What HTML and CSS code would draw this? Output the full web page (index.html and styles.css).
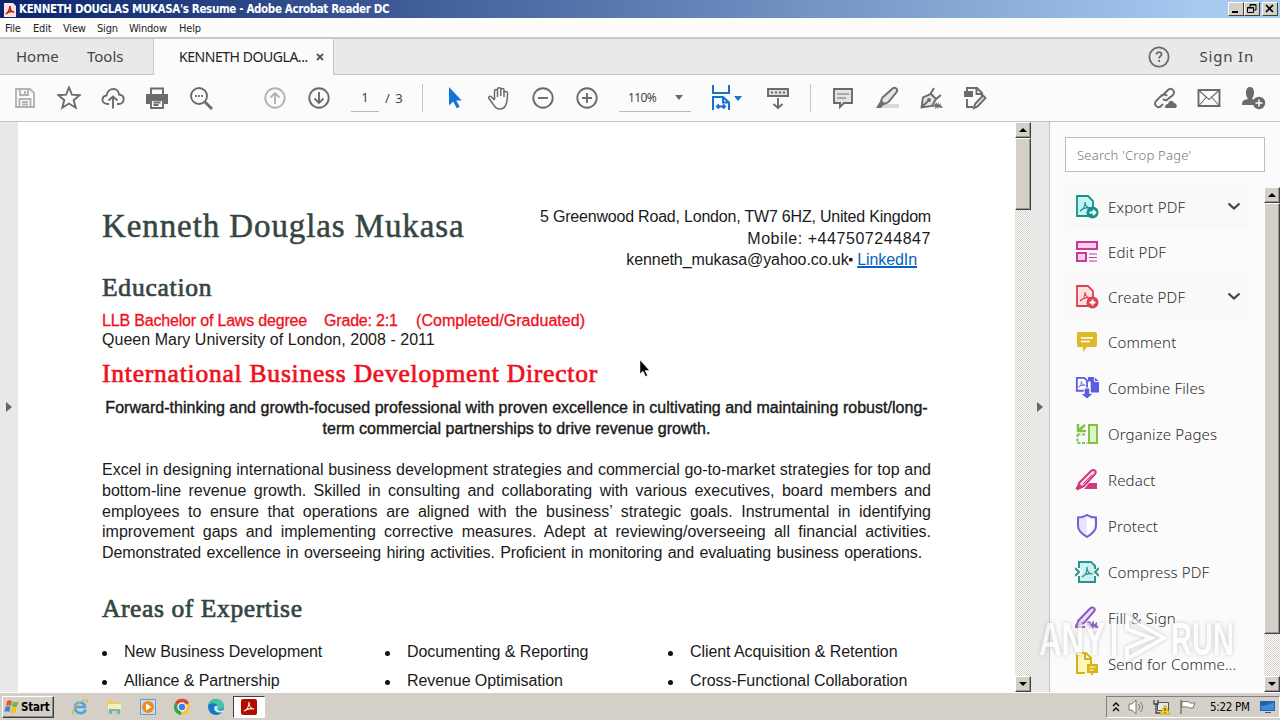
FILE: index.html
```
<!DOCTYPE html>
<html lang="en">
<head>
    <meta charset="UTF-8">
    <title>KENNETH DOUGLAS MUKASA's Resume - Adobe Acrobat Reader DC</title>
    <link rel="stylesheet" href="styles.css">
</head>
<body>

    <div class="titlebar">
        <svg class="app-icon" width="12" height="15" viewBox="0 0 12 15"><path d="M0 1h9l3 3v11H0z" fill="#f6e4e2"/><path d="M2 12c2-1 4-5 4-8 0 4 2 6 4 6-3-1-6 0-8 2z" fill="none" stroke="#c4160c" stroke-width="1.5"/></svg>
        <span class="title">KENNETH DOUGLAS MUKASA's Resume - Adobe Acrobat Reader DC</span>
        <div class="win-buttons">
            <div class="win-btn"><svg width="14" height="12"><path d="M3 9h6" stroke="#000" stroke-width="2"/></svg></div>
            <div class="win-btn"><svg width="14" height="12"><path d="M5 4V1.5h6V7H9M5 2h6M2.500 4.500h6v5h-6zM2 5h7" fill="none" stroke="#000"/></svg></div>
            <div class="win-btn close"><svg width="14" height="12"><path d="M3 2l7 7M10 2l-7 7" stroke="#000" stroke-width="1.700"/></svg></div>
        </div>
    </div>

    <div class="menubar">
        <span class="m-file">File</span>
        <span class="m-edit">Edit</span>
        <span class="m-view">View</span>
        <span class="m-sign">Sign</span>
        <span class="m-window">Window</span>
        <span>Help</span>
    </div>

    <div class="tabs">
        <div class="tabs-left">
            <span class="home">Home</span>
            <span class="tools-tab">Tools</span>
        </div>
        <div class="tab-active">
            <span>KENNETH DOUGLA...</span>
            <svg width="8" height="8" viewBox="0 0 8 8"><path d="M1 1l6 6M7 1L1 7" stroke="#555" stroke-width="1.800"/></svg>
        </div>
        <div class="tabs-right">
            <svg width="22" height="22" viewBox="0 0 22 22" fill="none" stroke="#6b6b6b" stroke-width="1.800"><circle cx="11" cy="11" r="9.600"/><path d="M8.500 8.500c0-3.200 5-3 5 0 0 1.800-2.400 1.800-2.400 4M11.100 14v2"/></svg>
            <span class="signin">Sign In</span>
        </div>
    </div>

    <div class="toolbar">
        <div class="tool dim"><svg width="24" height="24" viewBox="0 0 24 24"><path d="M3 3h14l4 4v14H3zM7 3v6h8V3M12 5v3M6.500 21v-8h11v8M9 16h6M9 18.500h6"/></svg></div>
        <div class="tool"><svg width="24" height="24" viewBox="0 0 24 24"><path d="M12 1.500l2.900 7.200 7.800.5-6 5 2 7.500L12 17.500l-6.700 4.200 2-7.500-6-5 7.800-.5z"/></svg></div>
        <div class="tool"><svg width="24" height="24" viewBox="0 0 24 24"><path d="M8 18H6.500C2.800 18 1 15.600 1.500 13c.4-2 2-3.300 4-3.500C6 5.500 9 3 12.500 3c3.300 0 5.300 2.500 5.500 5.500 3.500.3 5 2.500 4.700 5-.3 2.700-2 4.500-5 4.500H16M12 22.500V11M7.500 14.500L12 10.500l4.500 4"/></svg></div>
        <div class="tool"><svg width="24" height="24" viewBox="0 0 24 24"><path d="M6 8V2.500h12V8" /><path d="M1 8h22v10h-4v-4H5v4H1z" class="solid"/><path d="M6 14h12v8H6zM8.500 16.500h7M8.500 19h5"/></svg></div>
        <div class="tool"><svg width="24" height="24" viewBox="0 0 24 24"><circle cx="10" cy="10" r="8"/><path d="M16 16l7 7" stroke-width="2.800"/><path d="M6 10h1.800M9.100 10h1.800M12.200 10H14"/></svg></div>
        <div class="tool dim nav-up"><svg width="24" height="24" viewBox="0 0 24 24"><circle cx="12" cy="12" r="9.700"/><path d="M12 18V7M7.500 11.500L12 7l4.500 4.500"/></svg></div>
        <div class="tool"><svg width="24" height="24" viewBox="0 0 24 24"><circle cx="12" cy="12" r="9.700"/><path d="M12 6v11M7.500 12.500L12 17l4.500-4.500"/></svg></div>
        <div class="page-num">1</div>
        <div class="page-total">/ 3</div>
        <div class="sep"></div>
        <div class="tool pointer"><svg width="24" height="24" viewBox="0 0 24 24"><path d="M6 1v18.500l4.200-4 3.500 6.700 3-1.500-3.500-6.200h5.500z" fill="#1473d8" stroke="none"/></svg></div>
        <div class="tool"><svg width="24" height="24" viewBox="0 0 24 24" class="thin"><path d="M7.500 14V5c0-2 3-2 3 0v6M10.500 10V3.200c0-2 3.300-2 3.300 0V10M13.800 10V4c0-2 3.200-2 3.200 0v7M17 7c0-2 3.500-2 3.500 0 0 4 .2 7-1.300 11-1 3-3 5-6.500 5-4 0-5.200-2.300-6.700-5L2 12.500c-1-2 1-3 2.500-1.500L7.500 14"/></svg></div>
        <div class="tool"><svg width="24" height="24" viewBox="0 0 24 24"><circle cx="12" cy="12" r="9.700"/><path d="M7 12h10"/></svg></div>
        <div class="tool"><svg width="24" height="24" viewBox="0 0 24 24"><circle cx="12" cy="12" r="9.700"/><path d="M7 12h10M12 7v10"/></svg></div>
        <div class="zoom-box"><span>110%</span><i class="caret"></i></div>
        <div class="fit"><svg width="20" height="26" viewBox="0 0 20 26" fill="none" stroke="#1a6fd0" stroke-width="2"><path d="M2 0v8h16V0M2 25V12h10l6 5.500V25M12 12v5.500h6M6 21.500h8M8 19.500l-2 2 2 2M12 19.500l2 2-2 2" /></svg><i class="caret blue"></i></div>
        <div class="tool scroll-tool"><svg width="24" height="24" viewBox="0 0 24 24"><path d="M2 3h20v7H2z" fill="#ddd"/><path d="M5 6.500h14" stroke-dasharray="2 2"/><path d="M12 12v10M7.500 18l4.500 4 4.500-4"/></svg></div>
        <div class="sep sep2"></div>
        <div class="tool"><svg width="24" height="24" viewBox="0 0 24 24"><path d="M3 3h18v14h-8l-4 4v-4H3z" fill="#e4e4e4"/><path d="M6 8h12M6 12h9" class="hair"/></svg></div>
        <div class="tool"><svg width="24" height="24" viewBox="0 0 24 24"><path d="M10 18h14v4H6z" fill="#d9d9d9" stroke="none"/><path d="M17 3c2-2.500 6-.5 5 2.500L13.500 16 9 18l-3-3 1.500-3.500z" fill="#e4e4e4"/><path d="M5 15.500l4 3-3 3.500H1z" class="solid"/></svg></div>
        <div class="tool"><svg width="24" height="24" viewBox="0 0 24 24"><path d="M2.500 21.500L4 11.500l8-3.500 5 5-4 7z" fill="#e4e4e4"/><path d="M3 21l6-6M11.500 8L15 2M17 13l5-4"/><path d="M14 21l3-3v3l2-2.500V21l2-2v2h2.500" stroke-width="1.500"/><circle cx="10" cy="14" r="1"/></svg></div>
        <div class="tool"><svg width="24" height="24" viewBox="0 0 24 24"><path d="M4 5V2h10l5 5v3M13.500 2v6H19M4 13v8h6"/><path d="M1 5h9v6H1z" class="solid"/><path d="M20 9.500l2.500 2.500-8 8.500-3.500 1.500 1-4z" fill="#eee"/></svg></div>
        <div class="tool-end"></div>
        <div class="tool"><svg width="24" height="24" viewBox="0 0 24 24"><path d="M9 10l6-6c3-3 8 1 5 5l-5 4c-2 2-4 1-5 0M14 10c-1-2-4-2-6 0l-5 5c-3 4 2 8 5 5l2-2"/><path d="M12 22c0-3 1-4 3-4 1-4 5-4 6-1 3 0 4 5 1 5z" class="solid"/></svg></div>
        <div class="tool"><svg width="24" height="24" viewBox="0 0 24 24"><path d="M1.500 4h21v16h-21z"/><path d="M2 4.500l10 9 10-9M2 19.500l7-8M22 19.500l-7-8" class="hair"/></svg></div>
        <div class="tool"><svg width="26" height="24" viewBox="0 0 26 24"><path d="M2 19c0-5 2-5 6-6C5 9 5 1 10 1s5 8 2 12l3 1v5z" class="solid"/><circle cx="19" cy="17" r="6.200" class="solid" /><path d="M15.500 17h7M19 13.500v7" stroke="#fff" stroke-width="1.500"/></svg></div>
    </div>

    <div class="main">
        <div class="gutter left"><i class="arrow-right"></i></div>

        <div class="page">
            <div class="page-head">
                <h1>Kenneth Douglas Mukasa</h1>
                <div class="address">
                    <div class="addr1">5 Greenwood Road, London, TW7 6HZ, United Kingdom</div>
                    <div class="addr2">Mobile: +447507244847</div>
                    <div class="addr3">kenneth_mukasa@yahoo.co.uk<span class="dot">■</span> <a>LinkedIn</a></div>
                </div>
            </div>
            <h2>Education</h2>
            <div class="degree"><span class="d1">LLB Bachelor of Laws degree</span><span class="d2">Grade: 2:1</span><span class="d3">(Completed/Graduated)</span></div>
            <div class="school">Queen Mary University of London, 2008 - 2011</div>
            <h2 class="role">International Business Development Director</h2>
            <p class="tagline">Forward-thinking and growth-focused professional with proven excellence in cultivating and maintaining robust/long-<br>term commercial partnerships to drive revenue growth.</p>
            <p class="summary">Excel in designing international business development strategies and commercial go-to-market strategies for top and<br>
            bottom-line revenue growth. Skilled in consulting and collaborating with various executives, board members and<br>
            employees to ensure that operations are aligned with the business’ strategic goals. Instrumental in identifying<br>
            improvement gaps and implementing corrective measures. Adept at reviewing/overseeing all financial activities.</p>
            <p class="summary last">Demonstrated excellence in overseeing hiring activities. Proficient in monitoring and evaluating business operations.</p>
            <h2 class="areas">Areas of Expertise</h2>
            <ul class="skills">
                <li>New Business Development</li>
                <li>Documenting &amp; Reporting</li>
                <li>Client Acquisition &amp; Retention</li>
                <li>Alliance &amp; Partnership</li>
                <li>Revenue Optimisation</li>
                <li>Cross-Functional Collaboration</li>
            </ul>
        </div>

        <div class="scrollbar doc-scroll">
            <div class="sb-btn"><i class="up"></i></div>
            <div class="thumb"></div>
            <div class="sb-btn bottom"><i class="down"></i></div>
        </div>
        <div class="gutter right"><i class="arrow-right"></i></div>

        <div class="sidebar">
            <div class="search">Search 'Crop Page'</div>
            <div class="side-body">
                <ul class="tool-list">
                    <li class="shade">
                        <svg width="24" height="24" viewBox="0 0 24 24" fill="none" stroke="#15918b" stroke-width="1.800"><path d="M2 1h11l5 5v15H2z" fill="#c9f0f5"/><path d="M5 16c3-1 5-5 5-9 0 4 3 6 6 6-4-1-8 0-11 3z" stroke-width="1.100"/><circle cx="17.500" cy="17.500" r="6" fill="#15918b" stroke="none"/><path d="M14.500 17.500h6M18 15l2.500 2.500L18 20" stroke="#fff"/></svg>
                        <span>Export PDF</span>
                        <svg class="chev" width="14" height="9" viewBox="0 0 14 9"><path d="M1.500 1.500L7 6.500l5.500-5" fill="none" stroke="#444" stroke-width="2.200"/></svg>
                    </li>
                    <li>
                        <svg width="24" height="24" viewBox="0 0 24 24" fill="#fccdf0" stroke="#c63a91" stroke-width="2"><path d="M2 2h20v7H2zM2 13h9v8H2z"/><path d="M14 14h8M14 17.500h8M14 21h8" stroke-width="1.200"/></svg>
                        <span>Edit PDF</span>
                    </li>
                    <li class="shade">
                        <svg width="24" height="24" viewBox="0 0 24 24" fill="none" stroke="#d84255" stroke-width="1.800"><path d="M2 1h11l5 5v15H2z" fill="#fee1e1"/><path d="M5 16c3-1 5-5 5-9 0 4 3 6 6 6-4-1-8 0-11 3z" stroke-width="1.100"/><circle cx="17.500" cy="17.500" r="6" fill="#d84255" stroke="none"/><path d="M14.500 17.500h6M17.500 14.500v6" stroke="#fff"/></svg>
                        <span>Create PDF</span>
                        <svg class="chev" width="14" height="9" viewBox="0 0 14 9"><path d="M1.500 1.500L7 6.500l5.500-5" fill="none" stroke="#444" stroke-width="2.200"/></svg>
                    </li>
                    <li>
                        <svg width="24" height="24" viewBox="0 0 24 24"><path d="M3 2h17q2 0 2 2v11q0 2-2 2h-8l-4 5v-5H3q-1 0-1-2V4q0-2 1-2z" fill="#deb928"/><path d="M6 8h12M6 11.500h9" stroke="#fff" stroke-width="1.600"/></svg>
                        <span>Comment</span>
                    </li>
                    <li class="first-tall tall">
                        <svg width="26" height="24" viewBox="0 0 26 24"><path d="M14 0h7l5 5v12h-9V5h-3z" fill="#5c5ce0"/><path d="M21 0v5h5" fill="none" stroke="#fff"/><path d="M2 1h8l3 3v11H2z" fill="#fff" stroke="#5c5ce0" stroke-width="2"/><path d="M4 11c2-1 3-4 3-6 0 3 2 4 4 4-3 0-5 0-7 2z" fill="none" stroke="#5c5ce0"/><path d="M10 12h6v6h4l-7 6-7-6h4z" fill="#5c5ce0" stroke="#fff"/></svg>
                        <span>Combine Files</span>
                    </li>
                    <li class="tall">
                        <svg width="24" height="24" viewBox="0 0 24 24" fill="none" stroke="#80c24a" stroke-width="2"><path d="M14 3h8v18h-8z" fill="#d9f4cf"/><path d="M2.500 12.500h8M2.500 12v9h10" stroke-dasharray="3 1.500"/><path d="M10 3L4 8M3 2v7h8" stroke-width="2.500"/></svg>
                        <span>Organize Pages</span>
                    </li>
                    <li class="tall">
                        <svg width="24" height="24" viewBox="0 0 24 24"><path d="M10 20l4-5h8v6H9z" fill="#ce397f"/><path d="M4 15L16 3c3-2.500 6 .500 4 3L9 18l-6 3z" fill="#ffd8ee" stroke="#ce397f" stroke-width="2"/><path d="M8 16l9-9" stroke="#ce397f"/><path d="M0 21l4-6 4 4-3 2z" fill="#ce397f"/></svg>
                        <span>Redact</span>
                    </li>
                    <li class="tall">
                        <svg width="24" height="24" viewBox="0 0 24 24" fill="#e7e5ff" stroke="#6b63c9" stroke-width="2"><path d="M12 1c3 2 6 2.500 9 2.500V12c0 5-4 8-9 11-5-3-9-6-9-11V3.500C6 3.500 9 3 12 1z"/><path d="M12 3c3 2 5 2 7 2v7c0 4-3 6-7 9z" fill="#fff" stroke="none"/></svg>
                        <span>Protect</span>
                    </li>
                    <li class="tall">
                        <svg width="24" height="24" viewBox="0 0 24 24" fill="none" stroke="#2a938c" stroke-width="2"><path d="M4 8V2h12l4 4v3M4 16v6h16v-6"/><path d="M5 3h11l3 4v14H5V16l3-4-3-4z" fill="#cdf1f2" stroke="none"/><path d="M0 8l4 4-4 4M24 8l-4 4 4 4"/><path d="M7 17c3-1 5-5 5-10 0 4 2 7 6 7-4-1-8 0-11 3z" stroke-width="1.200"/></svg>
                        <span>Compress PDF</span>
                    </li>
                    <li class="tall">
                        <svg width="24" height="24" viewBox="0 0 24 24" fill="none" stroke="#8958bd" stroke-width="2"><path d="M3 15L15 2.500c3-2.500 6 0 4 3L9 17l-6 2z" fill="#edd9ff"/><path d="M3 16l-2.500 5H10"/><path d="M13 20v-3c0-1 2-1 2 0v4l3-4v4l3-3v3h2.500" stroke-width="1.800"/></svg>
                        <span>Fill &amp; Sign</span>
                    </li>
                    <li class="tall">
                        <svg width="24" height="24" viewBox="0 0 24 24"><path d="M10 21H2V1h9l5 5v6M10 1v6h6" fill="#fff6bd" stroke="#d5b315" stroke-width="2"/><path d="M12 12h11v9h-4l-3 3v-3h-4z" fill="#d9b40f"/><path d="M14.500 15h6M14.500 18h4" stroke="#fff"/></svg>
                        <span>Send for Comme...</span>
                    </li>
                </ul>
                <div class="scrollbar side-scroll">
                    <div class="sb-btn"><i class="up"></i></div>
                    <div class="thumb"></div>
                    <div class="sb-btn bottom"><i class="down"></i></div>
                </div>
            </div>
        </div>
    </div>

    <div class="taskbar">
        <div class="start">
            <svg width="16" height="16" viewBox="0 0 16 16"><path d="M3 2c2-1 3-1 5 0L7 7C5 6 4 6 2 7z" fill="#e35b24"/><path d="M9 2.500c2 1 3 1 5.500 0L13 7.500c-2 1-3 1-5 0z" fill="#7db72f"/><path d="M1.500 8c2-1 3-1 5 0l-1.200 5c-2-1-3-1-5 0z" fill="#3c84d8"/><path d="M7.500 8.500c2 1 3 1 5 0l-1 5c-2 1-3 1-5.200 0z" fill="#f7bf24"/></svg>
            <span>Start</span>
        </div>
        <div class="quick">
            <svg width="18" height="18" viewBox="0 0 18 18" fill="none"><path d="M14.500 11.500C13 17 4 16 4 9.500 4 3 14 3 14 9H5" stroke="#48a5df" stroke-width="2.600"/><path d="M3 15C-1 18 3 8 9 4c4-3 9-3 7 1" stroke="#d6b45c" stroke-width="1.300"/></svg>
            <svg width="18" height="18" viewBox="0 0 18 18"><path d="M2 2h6l1 2h7v11H2z" fill="#e9cd75"/><path d="M3 6h13v6H3z" fill="#f9edb2"/><path d="M4 16v-5h11v5h-3v-3H7v3z" fill="#65b5dd"/></svg>
            <svg width="18" height="18" viewBox="0 0 18 18"><path d="M1.500 1.500h15v15h-15z" fill="#c6dcf1" stroke="#639bd2"/><circle cx="9" cy="9" r="6" fill="#f28a13"/><path d="M7 5.500v7l5.500-3.500z" fill="#fff"/></svg>
            <svg width="18" height="18" viewBox="0 0 18 18"><circle cx="9" cy="9" r="8" fill="#f5c52a"/><path d="M9 9L2 5a8 8 0 0 1 14 0z" fill="#df4334"/><path d="M9 9v0L2 5a8 8 0 0 0 6 12z" fill="#31a455"/><circle cx="9" cy="9" r="4" fill="#3d7de5" stroke="#fff" stroke-width="1.300"/></svg>
            <svg width="18" height="18" viewBox="0 0 18 18"><circle cx="9" cy="9" r="8" fill="#1579c6"/><path d="M1 8c1-9 16-9 16 0 0 4-6 5-6 2 0-6-9-6-10-2z" fill="#43c6a2"/><path d="M8 8c-3 4 2 8 8 6l1-2c-4 2-8 0-6-4z" fill="#d4e9ef"/></svg>
        </div>
        <div class="task-active">
            <svg width="16" height="16" viewBox="0 0 16 16"><rect width="16" height="16" rx="2" fill="#b30b00"/><path d="M3 12c3-1 5-5 5-9 0 4 2 7 5 7-4-1-7 0-10 2z" fill="none" stroke="#fff" stroke-width="1.100"/></svg>
        </div>
        <div class="tray">
            <svg width="8" height="12" viewBox="0 0 8 12" fill="none" stroke="#000" stroke-width="1.400"><path d="M1 5l3-3 3 3M1 10l3-3 3 3"/></svg>
            <svg width="17" height="16" viewBox="0 0 17 16" fill="#fff" stroke="#777"><path d="M1 5h3l4-4v14l-4-4H1z"/><path d="M10.500 5c1.500 2 1.500 4 0 6M12.500 3c2.500 3 2.500 7 0 10" fill="none"/></svg>
            <svg width="18" height="16" viewBox="0 0 18 16"><path d="M4.500 3.500h11v8h-11z" fill="#e7e7e7" stroke="#555"/><path d="M1 1v4h4V1M3 5v9h4" fill="none" stroke="#444" stroke-width="1.300"/><path d="M12 6l5 9H7z" fill="#ffd21c" stroke="#b38b00" stroke-width=".6"/><path d="M12 9v3M12 13v1" stroke="#222"/></svg>
            <svg width="17" height="16" viewBox="0 0 17 16"><path d="M2 1v14" stroke="#777" stroke-width="1.500"/><path d="M3 2.500h6l2 1.500h5l-2 5h-4L9 8H3z" fill="#fff" stroke="#777"/></svg>
            <span class="clock">5:22 PM</span>
            <svg width="16" height="13" viewBox="0 0 16 13"><path d="M0 1h15v10H0z" fill="#2462ae"/><path d="M1 6c5 0 9-2 13-4v8H1z" fill="#3f8ddb"/><path d="M5 12.500h6" stroke="#555"/></svg>
        </div>
    </div>

    <svg class="watermark" width="210" height="64" viewBox="0 0 210 64">
        <g class="mark">
            <text x="4" y="47" textLength="66" lengthAdjust="spacingAndGlyphs">ANY</text>
            <text x="136" y="47" textLength="63" lengthAdjust="spacingAndGlyphs">RUN</text>
            <path d="M79 15v34M92 9v12l24 9-24 10v11l37-21z" fill="none" stroke="#fff" stroke-width="4"/>
        </g>
    </svg>

    <svg class="cursor" width="12" height="20" viewBox="0 0 12 20"><path d="M1 1v14l3-3 2.500 5.500 2-1L6 11.500h4.500z" fill="#000" stroke="#fff" stroke-width=".5"/></svg>

</body>
</html>
```
FILE: styles.css
```
body {
    margin: 0;
    width: 1280px;
    height: 720px;
    overflow: hidden;
    position: relative;
    background: #fff;
    font-family: "Liberation Sans", Arial, sans-serif;
}

svg {
    flex: none;
}

/* window chrome */
.titlebar {
    display: flex;
    align-items: center;
    height: 18px;
    padding: 0 2px 0 4px;
    background: linear-gradient(to right, #0a246a, #a6caf0 94%);
}

.title {
    margin-left: 3px;
    color: #fff;
    font: bold 11.5px/18px "DejaVu Sans Condensed", "DejaVu Sans", sans-serif;
    letter-spacing: -0.36px;
    white-space: nowrap;
}

.win-buttons {
    display: flex;
    margin-left: auto;
}

.win-btn {
    box-sizing: border-box;
    width: 16px;
    height: 14px;
    background: #d4d0c8;
    border: 1px solid;
    border-color: #fff #404040 #404040 #fff;
}

.win-btn svg {
    display: block;
}

.close {
    margin-left: 2px;
}

.menubar {
    display: flex;
    box-sizing: border-box;
    height: 21px;
    padding-left: 5px;
    border-bottom: 2px solid #c8c8c8;
    background: #fefcfb;
    color: #222;
    font: 11px/21px "DejaVu Sans Condensed", "DejaVu Sans", sans-serif;
    letter-spacing: -0.2px;
}

.m-file { width: 28px; }
.m-edit { width: 30px; }
.m-view { width: 34px; }
.m-sign { width: 32px; }
.m-window { width: 50px; }

.tabs {
    display: flex;
    height: 36px;
    background: #e9e9e9;
    font: 15px/35px "Noto Sans", sans-serif;
    color: #444;
}

.tabs-left {
    display: flex;
    box-sizing: border-box;
    width: 154px;
    padding-left: 16px;
    border-right: 1px solid #c4c4c4;
    border-bottom: 1px solid #c4c4c4;
}

.home {
    width: 71px;
}

.tab-active {
    display: flex;
    align-items: center;
    box-sizing: border-box;
    width: 179px;
    padding-left: 25px;
    background: #fbfbfb;
    color: #222;
    font-size: 14px;
}

.tab-active span {
    width: 137px;
    line-height: 34px;
    letter-spacing: -0.45px;
}

.tabs-right {
    display: flex;
    flex: 1;
    align-items: center;
    justify-content: flex-end;
    box-sizing: border-box;
    padding-right: 26px;
    border-left: 1px solid #c4c4c4;
    border-bottom: 1px solid #c4c4c4;
}

.signin {
    margin-left: 30px;
    letter-spacing: 0.8px;
}

/* toolbar */
.toolbar {
    display: flex;
    align-items: center;
    box-sizing: border-box;
    height: 47px;
    padding: 0 5px 0 3px;
    border-bottom: 1px solid #c4c4c4;
    background: #fbfbfb;
    color: #444;
    font: 13px/24px "Noto Sans", sans-serif;
}

.tool {
    display: flex;
    justify-content: center;
    width: 44px;
}

.tool svg {
    fill: none;
    stroke: #6b6b6b;
    stroke-width: 1.9;
}

.tool .thin {
    stroke-width: 1.5;
}

.tool .hair {
    stroke-width: 1.1;
}

.tool .solid {
    fill: #6b6b6b;
    stroke: none;
}

.tool.dim svg {
    stroke: #b3b3b3;
}

.nav-up {
    margin-left: 30px;
}

.page-num {
    width: 28px;
    height: 26px;
    margin-left: 10px;
    border-bottom: 1px solid #bbb;
    text-align: center;
}

.page-total {
    width: 37px;
    margin-left: 6px;
    word-spacing: 2px;
}

.sep {
    width: 1px;
    height: 28px;
    margin-right: 10px;
    background: #c4c4c4;
}

.sep2 {
    margin-left: 10px;
}

.zoom-box {
    display: flex;
    align-items: center;
    justify-content: space-between;
    box-sizing: border-box;
    width: 72px;
    height: 27px;
    margin-left: 10px;
    padding: 0 8px 0 9px;
    border-bottom: 1px solid #bbb;
    font-size: 12px;
    letter-spacing: -0.6px;
}

.caret {
    border: 4px solid transparent;
    border-top: 5px solid #6b6b6b;
    border-bottom: 0;
}

.caret.blue {
    margin-left: 3px;
    border-top-color: #1a6fd0;
}

.fit {
    display: flex;
    align-items: center;
    width: 45px;
    margin-left: 20px;
}

.tool-end {
    flex: 1;
}

/* document area */
.main {
    display: flex;
    height: 570px;
}

.gutter {
    display: flex;
    align-items: center;
    justify-content: center;
    width: 18px;
    background: #e8e8e8;
}

.arrow-right {
    border: 5px solid transparent;
    border-left: 6px solid #666;
    border-right: 0;
}

.page {
    box-sizing: border-box;
    width: 997px;
    padding: 84px 0 0 84px;
    overflow: hidden;
    color: #1a1a1a;
    font-size: 16px;
}

.page-head {
    display: flex;
    justify-content: space-between;
    width: 829px;
    height: 65px;
}

h1, h2 {
    margin: 0;
    font-family: "Liberation Serif", "Times New Roman", serif;
    font-weight: normal;
    color: #34463f;
    white-space: nowrap;
}

h1 {
    font-size: 33px;
    line-height: 40px;
    letter-spacing: 0.9px;
    -webkit-text-stroke: 0.5px;
}

h2 {
    font-size: 25.5px;
    line-height: 34px;
    letter-spacing: 0.78px;
    -webkit-text-stroke: 0.7px;
}

.address {
    line-height: 21.5px;
    text-align: right;
    white-space: nowrap;
    letter-spacing: -0.2px;
}

.addr2 {
    letter-spacing: 0.55px;
}

.addr3 {
    padding-right: 14px;
    letter-spacing: -0.08px;
}

.dot {
    font-size: 7px;
    vertical-align: 3px;
}

.address a {
    color: #0563c1;
    text-decoration: underline;
    text-decoration-thickness: 2px;
}

.degree {
    display: flex;
    margin-top: 6px;
    line-height: 19px;
    color: #f0101c;
    letter-spacing: -0.18px;
    -webkit-text-stroke: 0.3px;
}

.d1 { width: 222px; }
.d2 { width: 92px; }
.d3 { letter-spacing: 0.05px; }

.school {
    line-height: 19px;
    letter-spacing: 0.03px;
}

.role {
    margin-top: 8px;
    color: #f0101c;
}

.tagline {
    width: 829px;
    margin: 6px 0 21px;
    line-height: 21px;
    text-align: center;
    white-space: nowrap;
    letter-spacing: 0.02px;
    -webkit-text-stroke: 0.4px;
}

.summary {
    width: 829px;
    margin: 0;
    line-height: 20.75px;
    letter-spacing: 0;
    text-align: justify;
    text-align-last: justify;
}

.summary.last {
    width: 820px;
    letter-spacing: -0.12px;
}

.areas {
    margin-top: 28px;
    letter-spacing: 0.6px;
}

.skills {
    display: grid;
    grid-template-columns: repeat(3, 283px);
    margin: 11px 0 0;
    padding: 0;
    list-style: none;
    line-height: 29px;
    letter-spacing: -0.08px;
}

.skills li {
    display: flex;
    align-items: center;
}

.skills li::before {
    content: "";
    width: 5px;
    height: 5px;
    margin: 4px 17px 0 0;
    border-radius: 50%;
    background: #111;
}

/* classic scrollbars */
.scrollbar {
    display: flex;
    flex-direction: column;
    width: 16px;
    background: repeating-conic-gradient(#d4d0c8 0 25%, #fff 0 50%) 0 0 / 2px 2px;
}

.sb-btn, .thumb {
    box-sizing: border-box;
    background: #d4d0c8;
    border: 1px solid;
    border-color: #fff #404040 #404040 #fff;
    box-shadow: inset -1px -1px #999;
}

.sb-btn {
    display: flex;
    align-items: center;
    justify-content: center;
    height: 16px;
}

.bottom {
    margin-top: auto;
}

.up, .down {
    border: 4px solid transparent;
    border-bottom: 4px solid #000;
    border-top: 0;
}

.down {
    border-top: 4px solid #000;
    border-bottom: 0;
}

.doc-scroll .thumb {
    height: 72px;
}

.side-scroll .thumb {
    height: 431px;
}

/* right panel */
.sidebar {
    display: flex;
    flex-direction: column;
    box-sizing: border-box;
    width: 231px;
    padding: 15px 0 0 15px;
    border-left: 1px solid #c4c4c4;
    background: #fbfbfb;
    font-family: "Noto Sans", sans-serif;
}

.search {
    box-sizing: border-box;
    width: 200px;
    height: 35px;
    padding-left: 11px;
    border: 1px solid #bdbdbd;
    background: #fff;
    color: #777;
    font-size: 13px;
    font-weight: 300;
    letter-spacing: 0.25px;
    line-height: 34px;
}

.side-body {
    display: flex;
    justify-content: space-between;
    flex: 1;
    margin-top: 12px;
}

.tool-list {
    width: 184px;
    margin: 0;
    padding: 0;
    list-style: none;
    color: #2c2c2c;
    font-size: 15px;
    font-weight: 300;
    letter-spacing: 0.15px;
    white-space: nowrap;
}

.tool-list li {
    display: flex;
    align-items: center;
    height: 45px;
    padding-left: 10px;
}

.tool-list li.tall {
    height: 46px;
}

.first-tall {
    margin-top: 1px;
}

.tool-list svg {
    width: 24px;
}

.tool-list span {
    margin-left: 9px;
}

.tool-list .chev {
    width: 14px;
    margin-left: auto;
    margin-right: 8px;
}

.shade {
    background: #f9f9f9;
}

.side-scroll {
    margin-top: 3px;
}

/* taskbar */
.taskbar {
    display: flex;
    align-items: center;
    box-sizing: border-box;
    height: 28px;
    border-top: 1px solid #fff;
    background: #d4d0c8;
    font-family: "DejaVu Sans Condensed", "DejaVu Sans", sans-serif;
}

.start {
    display: flex;
    align-items: center;
    box-sizing: border-box;
    width: 52px;
    height: 22px;
    margin-left: 2px;
    border: 1px solid;
    border-color: #fff #404040 #404040 #fff;
    box-shadow: inset -1px -1px #888;
    font-size: 11.5px;
    font-weight: bold;
    letter-spacing: -0.2px;
}

.start svg {
    margin: 0 1px;
}

.quick {
    display: flex;
    gap: 16px;
    margin-left: 17px;
}

.task-active {
    display: flex;
    align-items: center;
    justify-content: center;
    box-sizing: border-box;
    width: 32px;
    height: 22px;
    margin-left: 8px;
    border: 1px solid;
    border-color: #404040 #fff #fff #404040;
    background: #fff;
}

.tray {
    display: flex;
    align-items: center;
    box-sizing: border-box;
    width: 174px;
    height: 22px;
    margin-left: auto;
    padding: 0 4px 0 5px;
    gap: 8px;
    border: 1px solid;
    border-color: #808080 #fff #fff #808080;
}

.clock {
    margin: 0 2px 0 6px;
    font-size: 11.5px;
    letter-spacing: -0.3px;
    white-space: nowrap;
}

/* overlays */
.watermark {
    position: absolute;
    left: 1035px;
    top: 608px;
}

.mark {
    fill: #fff;
    opacity: 0.65;
    filter: drop-shadow(0 0 2px #aaa);
    font: bold 46px "Liberation Sans", sans-serif;
}

.cursor {
    position: absolute;
    left: 639px;
    top: 359px;
}
```
